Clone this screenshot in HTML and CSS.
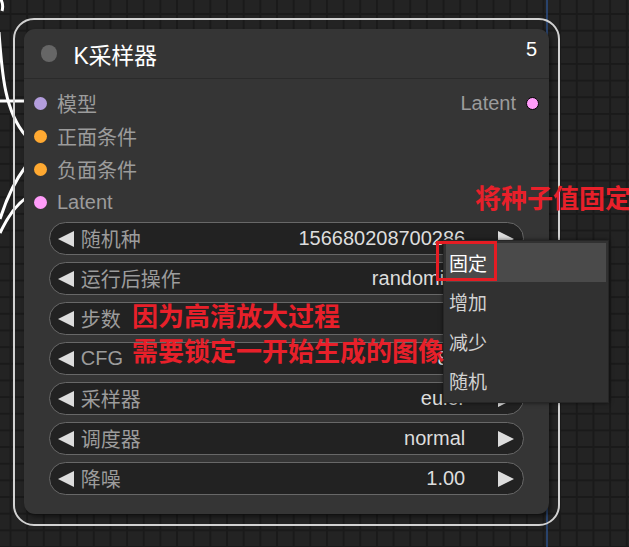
FILE: index.html
```html
<!DOCTYPE html>
<html lang="zh">
<head>
<meta charset="utf-8">
<title>K采样器</title>
<link rel="stylesheet" href="styles.css">
</head>
<body>
<div class="canvas">
  <svg class="wires" width="629" height="547" viewBox="0 0 629 547">
    <path class="wire-blue" d="M547 0 L547 547"/>
    <path class="wire" d="M0 -2 Q4 4 2 11"/>
    <path class="wire" d="M-1 32 C2 75, 5 112, 26 136"/>
    <path class="wire" d="M0 101 L26 101"/>
    <path class="wire" d="M0 219 C6 200, 14 182, 26 166"/>
    <path class="wire" d="M0 233 C8 216, 16 205, 26 198"/>
  </svg>

  <div class="selection"></div>

  <div class="node">
    <div class="node-title">
      <span class="title-dot"></span>
      <span class="title-text">K采样器</span>
      <span class="node-id">5</span>
    </div>
    <div class="node-body">
      <div class="slots">
        <div class="slot-row">
          <div class="slot-in"><span class="dot dot-model"></span>模型</div>
          <div class="slot-out">Latent<span class="dot dot-latent dot-out"></span></div>
        </div>
        <div class="slot-row">
          <div class="slot-in"><span class="dot dot-cond"></span>正面条件</div>
        </div>
        <div class="slot-row">
          <div class="slot-in"><span class="dot dot-cond"></span>负面条件</div>
        </div>
        <div class="slot-row">
          <div class="slot-in"><span class="dot dot-latent"></span>Latent</div>
        </div>
      </div>
      <div class="widgets">
        <div class="widget"><span class="arrow-l"></span><span class="w-label">随机种</span><span class="w-value">156680208700286</span><span class="arrow-r"></span></div>
        <div class="widget"><span class="arrow-l"></span><span class="w-label">运行后操作</span><span class="w-value">randomize</span><span class="arrow-r"></span></div>
        <div class="widget"><span class="arrow-l"></span><span class="w-label">步数</span><span class="w-value">20</span><span class="arrow-r"></span></div>
        <div class="widget"><span class="arrow-l"></span><span class="w-label">CFG</span><span class="w-value">8.0</span><span class="arrow-r"></span></div>
        <div class="widget"><span class="arrow-l"></span><span class="w-label">采样器</span><span class="w-value">euler</span><span class="arrow-r"></span></div>
        <div class="widget"><span class="arrow-l"></span><span class="w-label">调度器</span><span class="w-value">normal</span><span class="arrow-r"></span></div>
        <div class="widget"><span class="arrow-l"></span><span class="w-label">降噪</span><span class="w-value">1.00</span><span class="arrow-r"></span></div>
      </div>
    </div>
  </div>

  <div class="menu">
    <div class="menu-item menu-item-active">固定</div>
    <div class="menu-item">增加</div>
    <div class="menu-item">减少</div>
    <div class="menu-item">随机</div>
  </div>
  <div class="mark-box"></div>

  <div class="note note-seed">将种子值固定</div>
  <div class="note note-reason">因为高清放大过程<br>需要锁定一开始生成的图像</div>
</div>
</body>
</html>
```

FILE: styles.css
```css
* { box-sizing: border-box; }

html, body {
  margin: 0;
  padding: 0;
  width: 629px;
  height: 547px;
  overflow: hidden;
  background: #222222;
}

.canvas {
  position: relative;
  width: 629px;
  height: 547px;
  overflow: hidden;
  font-family: "Liberation Sans", "Noto Sans CJK SC", sans-serif;
  background-color: #232323;
  background-image:
    linear-gradient(to right, #1a1a1a 0, #1a1a1a 2px, transparent 2px),
    linear-gradient(to bottom, #1a1a1a 0, #1a1a1a 2px, transparent 2px);
  background-size: 16.667px 16.667px;
  background-position: 9.5px 13px;
}

.wires {
  position: absolute;
  left: 0;
  top: 0;
}
.wire {
  fill: none;
  stroke: #ffffff;
  stroke-width: 3;
}
.wire-blue {
  fill: none;
  stroke: #2c4f86;
  stroke-width: 1.5;
}

.selection {
  position: absolute;
  left: 13px;
  top: 18px;
  width: 547px;
  height: 508px;
  border: 2px solid #d2d2d2;
  border-radius: 21px;
}

.node {
  position: absolute;
  left: 24px;
  top: 29px;
  width: 525px;
  height: 485px;
  background: #353535;
  border-radius: 11px;
  box-shadow: 2px 3px 4px rgba(0, 0, 0, 0.45);
  display: flex;
  flex-direction: column;
}

.node-title {
  height: 50px;
  display: flex;
  align-items: center;
  padding: 0 12px 0 16.5px;
  border-bottom: 1px solid #2a2a2a;
  flex-shrink: 0;
}
.title-dot {
  width: 16.5px;
  height: 16.5px;
  border-radius: 50%;
  background: #666666;
  flex-shrink: 0;
}
.title-text {
  margin-left: 16.5px;
  font-size: 23px;
  color: #ffffff;
  letter-spacing: -0.3px;
}
.node-id {
  margin-left: auto;
  align-self: flex-start;
  margin-top: 9px;
  font-size: 20px;
  color: #ffffff;
}

.node-body {
  display: flex;
  flex-direction: column;
  padding-top: 7.5px;
}

.slots {
  display: flex;
  flex-direction: column;
}
.slot-row {
  height: 33px;
  display: flex;
  align-items: center;
  justify-content: space-between;
  padding: 0 10px;
}
.slot-in, .slot-out {
  display: flex;
  align-items: center;
  gap: 10px;
  font-size: 20px;
  color: #9c9c9c;
}
.slot-out { margin-left: auto; }

.dot {
  width: 13px;
  height: 13px;
  border-radius: 50%;
  display: inline-block;
  flex-shrink: 0;
}
.dot-model { background: #b39ddd; }
.dot-cond { background: #ffa931; }
.dot-latent { background: #ff9cf9; }
.dot-out { border: 1.5px solid #000; }

.widgets {
  display: flex;
  flex-direction: column;
  gap: 7px;
  margin-top: 3.5px;
  padding: 0 24.75px;
}
.widget {
  height: 33px;
  display: flex;
  align-items: center;
  background: #222222;
  border: 1.5px solid #686868;
  border-radius: 17px;
  padding: 0 9px 0 8.5px;
  font-size: 20px;
}
.arrow-l {
  width: 0;
  height: 0;
  border-top: 8.25px solid transparent;
  border-bottom: 8.25px solid transparent;
  border-right: 16.5px solid #dddddd;
  flex-shrink: 0;
}
.arrow-r {
  width: 0;
  height: 0;
  border-top: 8.25px solid transparent;
  border-bottom: 8.25px solid transparent;
  border-left: 16.5px solid #dddddd;
  margin-left: 33px;
  flex-shrink: 0;
}
.w-label {
  margin-left: 6.5px;
  color: #9c9c9c;
  white-space: nowrap;
}
.w-value {
  margin-left: auto;
  color: #dddddd;
  white-space: nowrap;
}

.menu {
  position: absolute;
  left: 443px;
  top: 240px;
  width: 166px;
  height: 163px;
  background: #313131;
  border: 1px solid #262626;
  box-shadow: 0 0 4px rgba(0, 0, 0, 0.6);
  padding: 2px 2px;
  display: flex;
  flex-direction: column;
}
.menu-item {
  height: 40px;
  display: flex;
  align-items: center;
  padding-left: 3px;
  font-size: 19px;
  color: #d2d2d2;
}
.menu-item-active {
  background: #4a4a4a;
  color: #ffffff;
}

.mark-box {
  position: absolute;
  left: 436px;
  top: 241px;
  width: 61px;
  height: 40px;
  border: 3px solid #e51c23;
}

.note {
  position: absolute;
  font-family: "Noto Sans CJK SC", sans-serif;
  font-weight: 700;
  font-size: 26px;
  color: #e8202a;
  white-space: nowrap;
}
.note-seed {
  left: 475px;
  top: 182px;
  line-height: 30px;
}
.note-reason {
  left: 132px;
  top: 297px;
  line-height: 35px;
}
```
